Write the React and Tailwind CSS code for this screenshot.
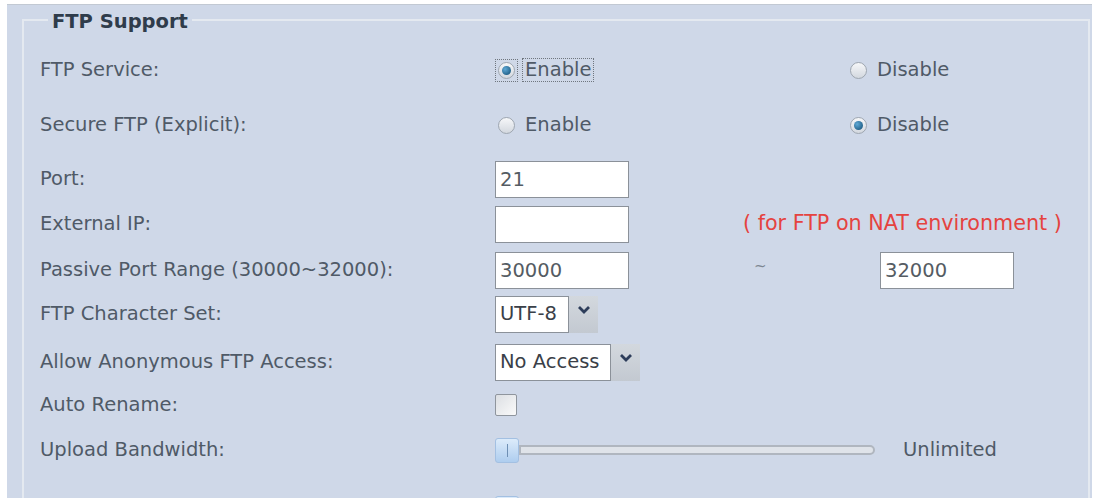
import { useState } from 'react'

function Radio({ checked, label, focused, onClick }) {
  return (
    <button type="button" onClick={onClick} className="flex items-center gap-[4px] text-[#4f5a67]">
      <span className={`flex h-[23px] w-[23px] items-center justify-center border ${focused ? 'border-dotted border-[#6f767e]' : 'border-transparent'}`}>
        <span className="flex h-[17px] w-[17px] items-center justify-center rounded-full border border-[#9ea6b0] bg-gradient-to-b from-[#f6f7f9] to-[#d3d8df]">
          {checked && <span className="h-[9px] w-[9px] rounded-full bg-[radial-gradient(circle_at_35%_35%,#5fa9d6,#0f4a70)]" />}
        </span>
      </span>
      <span className={`border px-[2px] leading-[22px] ${focused ? 'border-dotted border-[#6f767e]' : 'border-transparent'}`}>{label}</span>
    </button>
  )
}

function Row({ label, h, children }) {
  return (
    <div className={`flex items-center ${h}`}>
      <div className="w-[455px] shrink-0 text-[#4f5a67]">{label}</div>
      <div className="flex items-center">{children}</div>
    </div>
  )
}

function TextBox({ value }) {
  return (
    <input
      className="h-[37px] w-[134px] border border-[#8b9199] bg-white px-[4px] text-[#555c63] outline-none"
      defaultValue={value}
    />
  )
}

function Select({ value, w }) {
  return (
    <div className="flex h-[37px]">
      <div className={`${w} flex items-center border border-[#8b9199] bg-white px-[4px] text-[#3a4048]`}>{value}</div>
      <div className="flex w-[29px] items-start justify-center bg-gradient-to-b from-[#d3d8de] to-[#c3c9d1] pt-[9px]">
        <svg width="14" height="10" viewBox="0 0 14 10">
          <path d="M2 2 L7 7 L12 2" fill="none" stroke="#2d3d5a" strokeWidth="2.8" />
        </svg>
      </div>
    </div>
  )
}

function Slider() {
  return (
    <div className="flex items-center">
      <div className="flex h-[25px] w-[24px] items-center justify-center rounded-[3px] border border-[#a3c0e2] bg-gradient-to-b from-[#dcebfa] to-[#aecdef]">
        <span className="h-[13px] w-px bg-[#6e8fb4]" />
      </div>
      <div className="h-[10px] w-[356px] rounded-r-full border-2 border-[#b0b6bf] bg-[#dfe3e9]" />
    </div>
  )
}

export default function App() {
  const [ftp, setFtp] = useState(true)
  const [secure, setSecure] = useState(false)

  return (
    <div className="h-[498px] w-[1095px] overflow-hidden bg-white font-['DejaVu_Sans',sans-serif] text-[19.5px]">
      <div className="ml-[7px] mt-[4px] h-[530px] w-[1085px] border-t border-[#c2c9d3] bg-[#cfd8e8]">
        <fieldset className="ml-[15px] mt-[1px] w-[1068px] border-2 border-[#e4e9f0] pl-[16px] pt-[15px]">
          <legend className="ml-[8px] px-[4px] pt-[5px] font-bold leading-[22px] text-[#2f3c4b]">FTP Support</legend>

          <Row label="FTP Service:" h="h-[44px]">
            <div className="w-[352px]">
              <Radio checked={ftp} focused label="Enable" onClick={() => setFtp(true)} />
            </div>
            <Radio checked={!ftp} label="Disable" onClick={() => setFtp(false)} />
          </Row>

          <Row label="Secure FTP (Explicit):" h="h-[66px]">
            <div className="w-[352px]">
              <Radio checked={secure} label="Enable" onClick={() => setSecure(true)} />
            </div>
            <Radio checked={!secure} label="Disable" onClick={() => setSecure(false)} />
          </Row>

          <Row label="Port:" h="h-[42px]">
            <TextBox value="21" />
          </Row>

          <Row label="External IP:" h="h-[48px]">
            <TextBox value="" />
            <span className="ml-[114px] text-[20.7px] text-[#e5433f]">( for FTP on NAT environment )</span>
          </Row>

          <Row label="Passive Port Range (30000~32000):" h="h-[44px]">
            <TextBox value="30000" />
            <span className="ml-[125px] w-[126px] -translate-y-[4px] text-[15px] text-[#7d8691]">~</span>
            <TextBox value="32000" />
          </Row>

          <Row label="FTP Character Set:" h="h-[44px]">
            <Select value="UTF-8" w="w-[74px]" />
          </Row>

          <Row label="Allow Anonymous FTP Access:" h="h-[52px]">
            <Select value="No Access" w="w-[116px]" />
          </Row>

          <Row label="Auto Rename:" h="h-[34px]">
            <span className="h-[22px] w-[22px] rounded-[2px] border border-[#8f959d] bg-gradient-to-br from-[#dcdfe3] to-[#fafafa]" />
          </Row>

          <Row label="Upload Bandwidth:" h="h-[56px]">
            <Slider />
            <span className="ml-[28px] text-[#4f5a67]">Unlimited</span>
          </Row>

          <Row label="Download Bandwidth:" h="h-[60px]">
            <Slider />
            <span className="ml-[28px] text-[#4f5a67]">Unlimited</span>
          </Row>
        </fieldset>
      </div>
    </div>
  )
}
